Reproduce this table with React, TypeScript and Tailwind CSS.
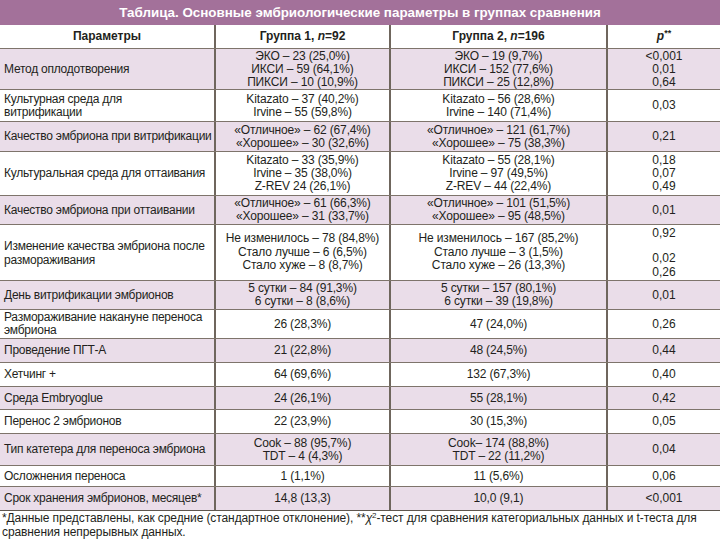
import React from "react";

type Row = {
  h: number;
  pink: boolean;
  label: React.ReactNode;
  g1: React.ReactNode;
  g2: React.ReactNode;
  p: React.ReactNode;
};

const L = ({ lines }: { lines: string[] }) => (
  <div className="flex flex-col items-center text-center">
    {lines.map((l, i) => (
      <div key={i} className="whitespace-pre">{l}</div>
    ))}
  </div>
);

const rows: Row[] = [
  {
    h: 41,
    pink: true,
    label: "Метод оплодотворения",
    g1: <L lines={["ЭКО – 23 (25,0%)", "ИКСИ – 59 (64,1%)", "ПИКСИ – 10 (10,9%)"]} />,
    g2: <L lines={["ЭКО – 19 (9,7%)", "ИКСИ – 152 (77,6%)", "ПИКСИ – 25 (12,8%)"]} />,
    p: <L lines={["<0,001", "0,01", "0,64"]} />,
  },
  {
    h: 32,
    pink: false,
    label: (
      <>
        Культурная среда для
        <br />
        витрификации
      </>
    ),
    g1: <L lines={["Kitazato – 37 (40,2%)", "Irvine – 55 (59,8%)"]} />,
    g2: <L lines={["Kitazato – 56 (28,6%)", "Irvine – 140 (71,4%)"]} />,
    p: <L lines={["0,03"]} />,
  },
  {
    h: 30,
    pink: true,
    label: "Качество эмбриона при витрификации",
    g1: <L lines={["«Отличное» – 62 (67,4%)", "«Хорошее» – 30 (32,6%)"]} />,
    g2: <L lines={["«Отличное» – 121 (61,7%)", "«Хорошее» – 75 (38,3%)"]} />,
    p: <L lines={["0,21"]} />,
  },
  {
    h: 44,
    pink: false,
    label: "Культуральная среда для оттаивания",
    g1: <L lines={["Kitazato – 33 (35,9%)", "Irvine – 35 (38,0%)", "Z-REV 24 (26,1%)"]} />,
    g2: <L lines={["Kitazato – 55 (28,1%)", "Irvine – 97 (49,5%)", "Z-REV – 44 (22,4%)"]} />,
    p: <L lines={["0,18", "0,07", "0,49"]} />,
  },
  {
    h: 29,
    pink: true,
    label: "Качество эмбриона при оттаивании",
    g1: <L lines={["«Отличное» – 61 (66,3%)", "«Хорошее» – 31 (33,7%)"]} />,
    g2: <L lines={["«Отличное» – 101 (51,5%)", "«Хорошее» – 95 (48,5%)"]} />,
    p: <L lines={["0,01"]} />,
  },
  {
    h: 56,
    pink: false,
    label: (
      <div className="leading-[14px]">
        Изменение качества эмбриона после
        <br />
        размораживания
      </div>
    ),
    g1: (
      <div className="leading-[13.5px]">
        <L lines={["Не изменилось – 78 (84,8%)", "Стало лучше – 6 (6,5%)", "Стало хуже – 8 (8,7%)"]} />
      </div>
    ),
    g2: (
      <div className="leading-[13.5px]">
        <L lines={["Не изменилось – 167 (85,2%)", "Стало лучше – 3 (1,5%)", "Стало хуже – 26 (13,3%)"]} />
      </div>
    ),
    p: (
      <div className="flex h-full flex-col items-center pt-[1px] leading-[14px]">
        <div>0,92</div>
        <div className="mt-[11px]">0,02</div>
        <div>0,26</div>
      </div>
    ),
  },
  {
    h: 29,
    pink: true,
    label: "День витрификации эмбрионов",
    g1: <L lines={["5 сутки – 84 (91,3%)", "6 сутки – 8 (8,6%)"]} />,
    g2: <L lines={["5 сутки – 157 (80,1%)", "6 сутки – 39 (19,8%)"]} />,
    p: <L lines={["0,01"]} />,
  },
  {
    h: 29,
    pink: false,
    label: (
      <>
        Размораживание накануне переноса
        <br />
        эмбриона
      </>
    ),
    g1: <L lines={["26 (28,3%)"]} />,
    g2: <L lines={["47 (24,0%)"]} />,
    p: <L lines={["0,26"]} />,
  },
  {
    h: 24,
    pink: true,
    label: "Проведение ПГТ-А",
    g1: <L lines={["21 (22,8%)"]} />,
    g2: <L lines={["48 (24,5%)"]} />,
    p: <L lines={["0,44"]} />,
  },
  {
    h: 24,
    pink: false,
    label: "Хетчинг +",
    g1: <L lines={["64 (69,6%)"]} />,
    g2: <L lines={["132 (67,3%)"]} />,
    p: <L lines={["0,40"]} />,
  },
  {
    h: 23,
    pink: true,
    label: "Среда Embryoglue",
    g1: <L lines={["24 (26,1%)"]} />,
    g2: <L lines={["55 (28,1%)"]} />,
    p: <L lines={["0,42"]} />,
  },
  {
    h: 24,
    pink: false,
    label: "Перенос 2 эмбрионов",
    g1: <L lines={["22 (23,9%)"]} />,
    g2: <L lines={["30 (15,3%)"]} />,
    p: <L lines={["0,05"]} />,
  },
  {
    h: 32,
    pink: true,
    label: "Тип катетера для переноса эмбриона",
    g1: <L lines={["Cook – 88 (95,7%)", "TDT – 4 (4,3%)"]} />,
    g2: <L lines={["Cook– 174 (88,8%)", "TDT – 22 (11,2%)"]} />,
    p: <L lines={["0,04"]} />,
  },
  {
    h: 21,
    pink: false,
    label: "Осложнения переноса",
    g1: <L lines={["1 (1,1%)"]} />,
    g2: <L lines={["11 (5,6%)"]} />,
    p: <L lines={["0,06"]} />,
  },
  {
    h: 24,
    pink: true,
    label: "Срок хранения эмбрионов, месяцев*",
    g1: <L lines={["14,8 (13,3)"]} />,
    g2: <L lines={["10,0 (9,1)"]} />,
    p: <L lines={["<0,001"]} />,
  },
];

const grid = "grid grid-cols-[214px_175px_217px_114px]";
const vline = "border-l-2 border-[#6f665d]";

export default function App() {
  return (
    <div
      className="w-[720px] h-[539px] bg-white text-[#231f20] text-[12px] leading-[13px]"
      style={{ fontFamily: '"Liberation Sans", Arial, sans-serif' }}
    >
      <div className="h-[25px] bg-[#a3719a] flex items-center justify-center text-white font-bold text-[13.4px]">
        Таблица. Основные эмбриологические параметры в группах сравнения
      </div>
      <div className={`${grid} h-[24px] border-b border-[#7e746b] font-bold`}>
        <div className="flex items-center justify-center">Параметры</div>
        <div className={`flex items-center justify-center ${vline}`}>
          Группа 1,&nbsp;<i>n</i>=92
        </div>
        <div className={`flex items-center justify-center ${vline}`}>
          Группа 2,&nbsp;<i>n</i>=196
        </div>
        <div className={`flex items-center justify-center ${vline}`}>
          <i>p</i>
          <span className="relative -top-[3px] text-[9px]">**</span>
        </div>
      </div>
      {rows.map((r, i) => (
        <div
          key={i}
          className={`${grid} border-b ${
            i === rows.length - 1 ? "border-[#5f574f]" : "border-[#7e746b]"
          } ${r.pink ? "bg-[#eadde9]" : "bg-white"}`}
          style={{ height: r.h }}
        >
          <div className="flex items-center whitespace-nowrap pl-[4px] tracking-[-0.25px]">{r.label}</div>
          <div className={`flex items-center justify-center tracking-[-0.15px] ${vline}`}>{r.g1}</div>
          <div className={`flex items-center justify-center tracking-[-0.15px] ${vline}`}>{r.g2}</div>
          <div className={`flex ${i === 5 ? "items-start" : "items-center"} justify-center ${vline}`}>
            {r.p}
          </div>
        </div>
      ))}
      <div className="pl-[2px] pt-[1px] leading-[13px] tracking-[-0.1px]">
        *Данные представлены, как средние (стандартное отклонение), **<i>χ</i>
        <span className="relative -top-[4px] text-[8px]">2</span>-тест для сравнения категориальных данных и t-теста для
        <br />
        сравнения непрерывных данных.
      </div>
    </div>
  );
}
